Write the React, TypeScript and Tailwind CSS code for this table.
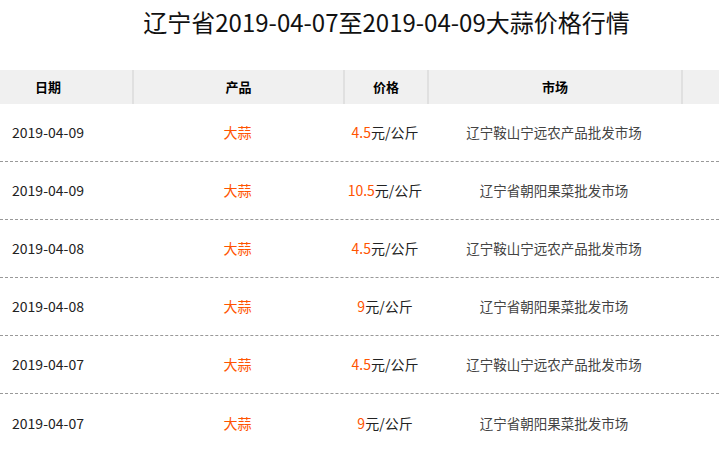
const rows = [
  { date: "2019-04-09", price: "4.5", market: "辽宁鞍山宁远农产品批发市场" },
  { date: "2019-04-09", price: "10.5", market: "辽宁省朝阳果菜批发市场" },
  { date: "2019-04-08", price: "4.5", market: "辽宁鞍山宁远农产品批发市场" },
  { date: "2019-04-08", price: "9", market: "辽宁省朝阳果菜批发市场" },
  { date: "2019-04-07", price: "4.5", market: "辽宁鞍山宁远农产品批发市场" },
  { date: "2019-04-07", price: "9", market: "辽宁省朝阳果菜批发市场" },
];

const cols = "grid grid-cols-[132px_211px_84px_254px_1fr]";

export default function App() {
  return (
    <div
      className="w-[719px] h-[450px] overflow-hidden bg-white text-[14px] text-[#333]"
      style={{ fontFamily: '"Noto Sans CJK SC", sans-serif' }}
    >
      <div className="h-[70px] pl-[54px] flex justify-center pt-[4px]">
        <h1 className="text-[24px] leading-[36px] text-[#111]">辽宁省2019-04-07至2019-04-09大蒜价格行情</h1>
      </div>
      <div className={`${cols} h-[34px] bg-[#f0f0f0] font-bold text-[13px] text-black items-stretch`}>
        <div className="flex items-center justify-center pr-[36px]">日期</div>
        <div className="flex items-center justify-center border-l-2 border-[#e0e0e0]">产品</div>
        <div className="flex items-center justify-center border-l-2 border-[#e0e0e0]">价格</div>
        <div className="flex items-center justify-center border-l-2 border-[#e0e0e0]">市场</div>
        <div className="border-l-2 border-[#e0e0e0]" />
      </div>
      {rows.map((r, i) => (
        <div
          key={i}
          className={`${cols} h-[58px] items-center ${i < rows.length - 1 ? "border-b border-dashed border-[#999]" : ""}`}
        >
          <div className="text-center pr-[36px] text-[#222]">{r.date}</div>
          <div className="text-center text-[#ff5400]">大蒜</div>
          <div className="text-center whitespace-nowrap text-[#222]">
            <span className="text-[#ff5400]">{r.price}</span>元/公斤
          </div>
          <div className="text-center text-[13.5px] text-[#444]">{r.market}</div>
          <div />
        </div>
      ))}
    </div>
  );
}
